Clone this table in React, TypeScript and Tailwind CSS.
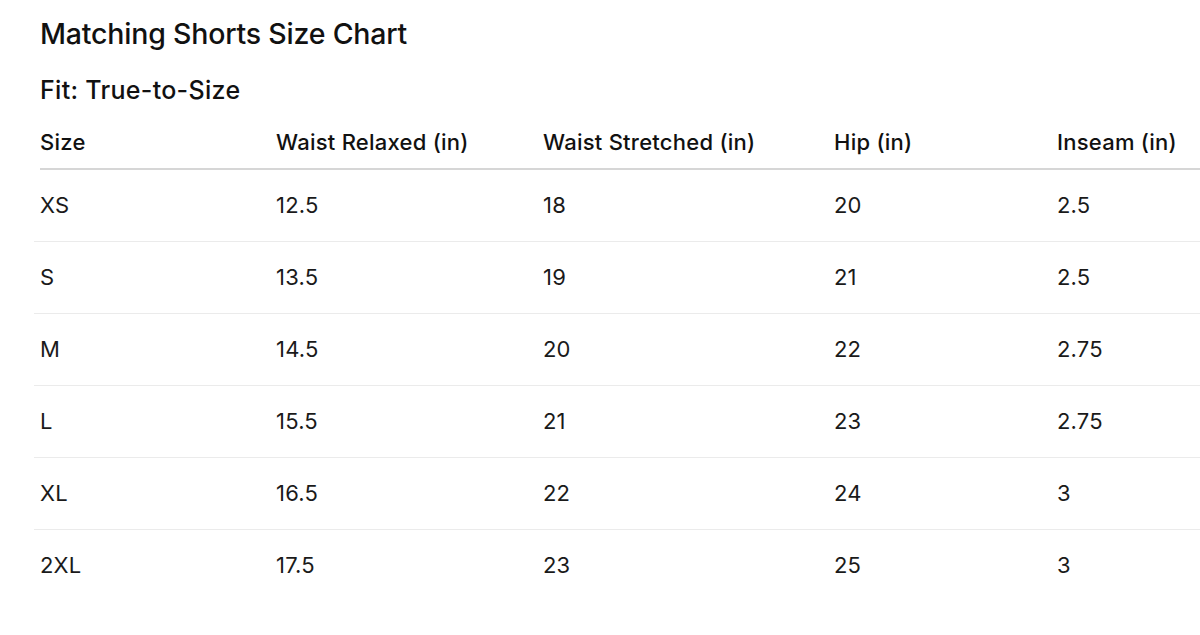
import React from "react";

const rows = [
  ["XS", "12.5", "18", "20", "2.5"],
  ["S", "13.5", "19", "21", "2.5"],
  ["M", "14.5", "20", "22", "2.75"],
  ["L", "15.5", "21", "23", "2.75"],
  ["XL", "16.5", "22", "24", "3"],
  ["2XL", "17.5", "23", "25", "3"],
];

const headers = ["Size", "Waist Relaxed (in)", "Waist Stretched (in)", "Hip (in)", "Inseam (in)"];
const widths = ["w-[236px]", "w-[267px]", "w-[291px]", "w-[223px]", "w-[200px]"];

export default function App() {
  return (
    <div className="w-[1200px] h-[635px] overflow-hidden bg-white text-[#111] pl-[40px]" style={{ fontFamily: "Inter, 'Noto Sans', sans-serif" }}>
      <h1 className="text-[28.5px] font-medium leading-none pt-[20px] tracking-[-0.2px]">Matching Shorts Size Chart</h1>
      <h2 className="text-[25px] font-medium leading-none mt-[29px] tracking-[0.3px]">Fit: True-to-Size</h2>
      <div className="w-[1240px] mt-[14px]">
        <div className="flex h-[53px] items-center border-b-2 border-[#d6d6d6]">
          {headers.map((h, i) => (
            <div key={h} className={`${widths[i]} shrink-0 text-[22px] font-medium tracking-[0.25px]`}>{h}</div>
          ))}
        </div>
        {rows.map((r, ri) => (
          <div key={ri} className={`flex h-[72px] items-center ${ri < rows.length - 1 ? "border-b border-[#ebebeb]" : ""} -ml-[6px] pl-[6px]`}>
            {r.map((c, i) => (
              <div key={i} className={`${widths[i]} shrink-0 text-[22px] font-normal tracking-[0.2px] text-[#1a1a1a]`}>{c}</div>
            ))}
          </div>
        ))}
      </div>
    </div>
  );
}
